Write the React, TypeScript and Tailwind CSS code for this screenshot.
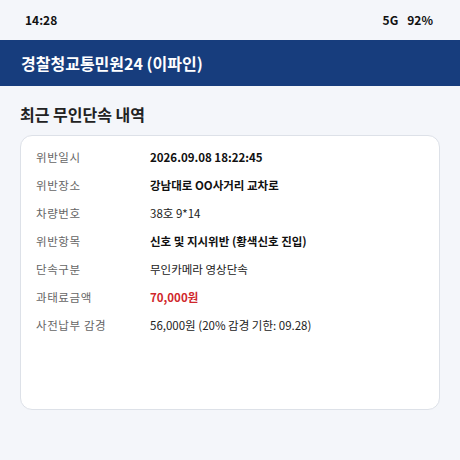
import React from "react";

const rows: { label: string; value: string; cls: string }[] = [
  { label: "위반일시", value: "2026.09.08 18:22:45", cls: "font-bold text-[#111]" },
  { label: "위반장소", value: "강남대로 OO사거리 교차로", cls: "font-semibold text-[#111]" },
  { label: "차량번호", value: "38호 9*14", cls: "text-[#222]" },
  { label: "위반항목", value: "신호 및 지시위반 (황색신호 진입)", cls: "font-semibold text-[#111]" },
  { label: "단속구분", value: "무인카메라 영상단속", cls: "text-[#222]" },
  { label: "과태료금액", value: "70,000원", cls: "font-bold text-[#d0272c]" },
  { label: "사전납부 감경", value: "56,000원 (20% 감경 기한: 09.28)", cls: "text-[#222]" },
];

export default function App() {
  return (
    <div
      className="w-[460px] h-[460px] bg-[#f4f6fa] flex flex-col"
      style={{ fontFamily: '"Noto Sans CJK KR", "Noto Sans", sans-serif' }}
    >
      <div className="h-[40px] flex items-center justify-between pl-[25px] pr-[27px] text-[12px] font-semibold text-[#111]">
        <span>14:28</span>
        <span className="flex gap-[9px]">
          <span>5G</span>
          <span>92%</span>
        </span>
      </div>
      <div className="h-[46px] bg-[#173d7d] flex items-center pl-[21px] text-white text-[16px] font-semibold">
        경찰청교통민원24 (이파인)
      </div>
      <div className="px-[20px] pt-[17px]">
        <h2 className="text-[16px] font-bold text-[#222] leading-[22px]">최근 무인단속 내역</h2>
        <div className="mt-[10px] h-[275px] bg-white border border-[#dde1e8] rounded-[12px] px-[15px] pt-[8px]">
          {rows.map((r) => (
            <div key={r.label} className="h-[28px] flex items-center">
              <span className="w-[114px] text-[#666] text-[11.5px] tracking-[0.6px]">{r.label}</span>
              <span className={"text-[11.5px] " + r.cls}>{r.value}</span>
            </div>
          ))}
        </div>
      </div>
    </div>
  );
}
